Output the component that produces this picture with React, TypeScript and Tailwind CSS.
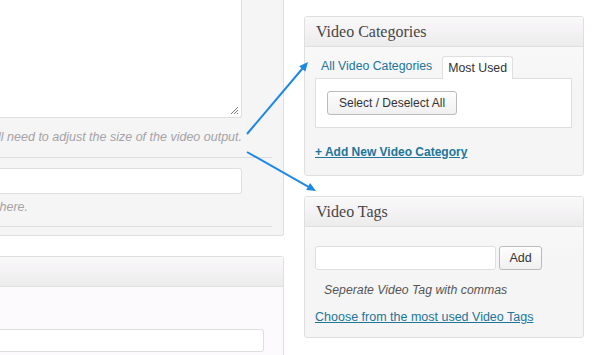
// Video post screen: meta boxes with annotation arrows
import React from "react";

const SANS = "font-['Liberation_Sans',Arial,sans-serif]";
const SERIF = "font-['Liberation_Serif','Times_New_Roman',serif]";

function BoxHeader({ title }: { title?: string }) {
  return (
    <div
      className={`h-[30px] border-b border-[#dfdfdf] bg-[linear-gradient(#f9f9f9,#f5f3f5_45%,#ececec)] pl-[11px] text-[16px] leading-[29px] text-[#464646] ${SERIF}`}
    >
      {title}
    </div>
  );
}

function Arrows() {
  return (
    <svg
      className="pointer-events-none absolute inset-0"
      width="600"
      height="355"
      viewBox="0 0 600 355"
    >
      <g stroke="#1e88e5" strokeWidth="2" fill="#1e88e5">
        <line x1="247" y1="134" x2="302.5" y2="68.5" />
        <polygon points="308,62 305.3,71.5 299.1,66.3" stroke="none" />
        <line x1="247" y1="152" x2="308.5" y2="186.8" />
        <polygon points="316,191 306.2,190.1 310.1,183.1" stroke="none" />
      </g>
    </svg>
  );
}

export default function App() {
  return (
    <div className={`relative flex h-[355px] w-[600px] overflow-hidden bg-white text-[12px] text-[#333] ${SANS}`}>
      {/* LEFT COLUMN */}
      <div className="flex w-[284px] shrink-0 flex-col">
        <div className="rounded-br-[3px] border-r border-b border-[#dfdfdf] bg-[#f5f5f5] pr-[11px] pb-[8px]">
          <div className="relative h-[118px] w-[242px] rounded-br-[3px] border-r border-b border-[#dfdfdf] bg-white">
            <svg className="absolute right-[2px] bottom-[2px]" width="9" height="9" viewBox="0 0 9 9">
              <path d="M1 8 L8 1 M4 8 L8 4 M7 8 L8 7" stroke="#777" strokeWidth="1" />
            </svg>
          </div>
          <div className="mt-[10px] flex w-[242px] justify-end whitespace-nowrap text-[12.5px] italic leading-[18px] text-[#a6a2a6]">
            <span>If you change the width or height, you will need to adjust the size of the video output.</span>
          </div>
          <div className="mt-[11px] h-px bg-[#dfdfdf]" />
          <div className="mt-[10px] h-[26px] w-[242px] rounded-r-[3px] border-y border-r border-[#dfdfdf] bg-white" />
          <div className="mt-[4px] flex w-[28px] justify-end whitespace-nowrap text-[12.5px] italic leading-[18px] text-[#a6a2a6]">
            <span>Paste the embed code here.</span>
          </div>
          <div className="mt-[10px] h-px bg-[#dfdfdf]" />
        </div>

        <div className="mt-[20px] flex-1 rounded-tr-[3px] border-t border-r border-[#dfdfdf] bg-[#fdfafd]">
          <BoxHeader />
          <div className="mt-[42px] h-[23px] w-[264px] rounded-r-[3px] border-y border-r border-[#dfdfdf] bg-white" />
        </div>
      </div>

      {/* RIGHT COLUMN */}
      <div className="ml-[20px] flex w-[280px] shrink-0 flex-col pt-[16px]">
        <div className="overflow-hidden rounded-[3px] border border-[#dfdfdf] bg-[linear-gradient(#fdfbfd,#f5f5f5_75px)]">
          <BoxHeader title="Video Categories" />
          <div className="pt-[8px] pr-[11px] pb-[14px] pl-[10px]">
            <div className="flex h-[23px] items-end text-[12.3px]">
              <div className="px-[6px] leading-[23px] text-[#21759b]">All Video Categories</div>
              <div className="relative top-px ml-[4px] rounded-t-[3px] border-x border-t border-[#dfdfdf] bg-white px-[5px] leading-[22px] text-[#333]">
                Most Used
              </div>
            </div>
            <div className="h-[50px] border border-[#dfdfdf] bg-white pt-[12px] pl-[11px]">
              <button className="h-[24px] rounded-[3px] border border-[#bbb] bg-[linear-gradient(#fefefe,#f0f0f0)] px-[11px] text-[12px] leading-[22px] text-[#333]">
                Select / Deselect All
              </button>
            </div>
            <div className="mt-[15px] font-bold leading-[18px] text-[#21759b] underline">
              + Add New Video Category
            </div>
          </div>
        </div>

        <div className="mt-[20px] overflow-hidden rounded-[3px] border border-[#dfdfdf] bg-[linear-gradient(#fdfbfd,#f5f5f5_60px)]">
          <BoxHeader title="Video Tags" />
          <div className="pt-[19px] pr-[11px] pb-[11px] pl-[10px]">
            <div className="flex gap-[3px]">
              <div className="h-[24px] w-[181px] rounded-[3px] border border-[#dfdfdf] bg-white" />
              <button className="h-[24px] w-[43px] rounded-[3px] border border-[#bbb] bg-[linear-gradient(#fefefe,#f0f0f0)] text-[12.5px] text-[#333]">
                Add
              </button>
            </div>
            <div className="mt-[11px] pl-[9px] text-[12.3px] italic leading-[18px] text-[#555]">
              Seperate Video Tag with commas
            </div>
            <div className="mt-[9px] text-[12.5px] leading-[18px] text-[#21759b] underline">
              Choose from the most used Video Tags
            </div>
          </div>
        </div>
      </div>

      <Arrows />
    </div>
  );
}
